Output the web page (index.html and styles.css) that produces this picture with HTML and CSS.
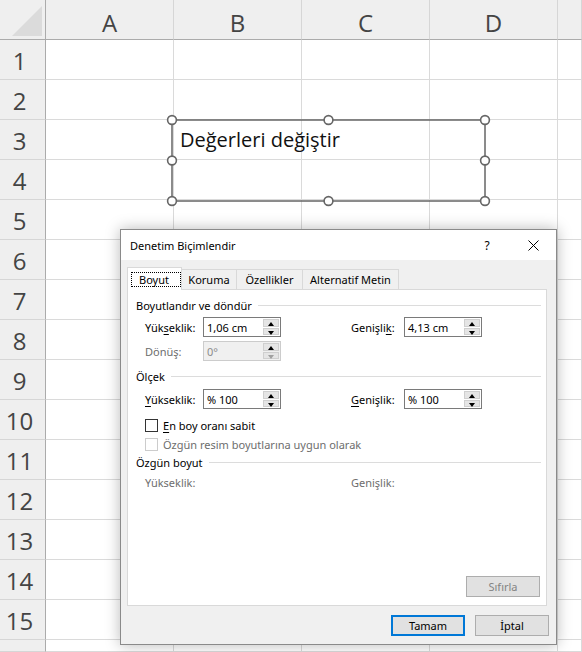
FILE: index.html
```html
<!DOCTYPE html>
<html lang="tr">
<head>
<meta charset="utf-8">
<title>Denetim Biçimlendir</title>
<link rel="stylesheet" href="styles.css">
</head>
<body>
<div class="sheet">
  <div class="corner"><svg width="45" height="39" viewBox="0 0 45 39"><polygon points="12,36 42,36 42,6" fill="#dbdbdb"/></svg></div>
  <div class="colh">A</div><div class="colh">B</div><div class="colh">C</div><div class="colh">D</div><div class="colh"></div>
  <div class="rowh">1</div><div class="cell"></div><div class="cell"></div><div class="cell"></div><div class="cell"></div><div class="cell"></div>
  <div class="rowh">2</div><div class="cell"></div><div class="cell"></div><div class="cell"></div><div class="cell"></div><div class="cell"></div>
  <div class="rowh">3</div><div class="cell"></div><div class="cell"></div><div class="cell"></div><div class="cell"></div><div class="cell"></div>
  <div class="rowh">4</div><div class="cell"></div><div class="cell"></div><div class="cell"></div><div class="cell"></div><div class="cell"></div>
  <div class="rowh">5</div><div class="cell"></div><div class="cell"></div><div class="cell"></div><div class="cell"></div><div class="cell"></div>
  <div class="rowh">6</div><div class="cell"></div><div class="cell"></div><div class="cell"></div><div class="cell"></div><div class="cell"></div>
  <div class="rowh">7</div><div class="cell"></div><div class="cell"></div><div class="cell"></div><div class="cell"></div><div class="cell"></div>
  <div class="rowh">8</div><div class="cell"></div><div class="cell"></div><div class="cell"></div><div class="cell"></div><div class="cell"></div>
  <div class="rowh">9</div><div class="cell"></div><div class="cell"></div><div class="cell"></div><div class="cell"></div><div class="cell"></div>
  <div class="rowh">10</div><div class="cell"></div><div class="cell"></div><div class="cell"></div><div class="cell"></div><div class="cell"></div>
  <div class="rowh">11</div><div class="cell"></div><div class="cell"></div><div class="cell"></div><div class="cell"></div><div class="cell"></div>
  <div class="rowh">12</div><div class="cell"></div><div class="cell"></div><div class="cell"></div><div class="cell"></div><div class="cell"></div>
  <div class="rowh">13</div><div class="cell"></div><div class="cell"></div><div class="cell"></div><div class="cell"></div><div class="cell"></div>
  <div class="rowh">14</div><div class="cell"></div><div class="cell"></div><div class="cell"></div><div class="cell"></div><div class="cell"></div>
  <div class="rowh">15</div><div class="cell"></div><div class="cell"></div><div class="cell"></div><div class="cell"></div><div class="cell"></div>
  <div class="rowh last"></div><div class="cell"></div><div class="cell"></div><div class="cell"></div><div class="cell"></div><div class="cell"></div>
</div>

<div class="shape">
  <svg class="shape-frame" width="325" height="93" viewBox="0 0 325 93">
    <rect x="6" y="6" width="313" height="81" fill="none" stroke="#666" stroke-width="1.5"/>
    <g fill="#fff" stroke="#666" stroke-width="1.6">
      <circle cx="6" cy="6" r="4.4"/><circle cx="162.5" cy="6" r="4.4"/><circle cx="319" cy="6" r="4.4"/>
      <circle cx="6" cy="46.5" r="4.4"/><circle cx="319" cy="46.5" r="4.4"/>
      <circle cx="6" cy="87" r="4.4"/><circle cx="162.5" cy="87" r="4.4"/><circle cx="319" cy="87" r="4.4"/>
    </g>
  </svg>
  <div class="shape-text">Değerleri değiştir</div>
</div>

<div class="dialog">
  <div class="titlebar">
    <span class="title">Denetim Biçimlendir</span>
    <span class="tbtn help">?</span>
    <span class="tbtn close"><svg width="11" height="11" viewBox="0 0 11 11"><path d="M0.5 0.5 L10.5 10.5 M10.5 0.5 L0.5 10.5" stroke="#000" stroke-width="1"/></svg></span>
  </div>
  <div class="dbody">
    <div class="tabs">
      <div class="tab sel"><span class="focus">Boyut</span></div>
      <div class="tab w55">Koruma</div>
      <div class="tab w66">Özellikler</div>
      <div class="tab w96">Alternatif Metin</div>
    </div>
    <div class="panel">
      <div class="group g1">Boyutlandır ve döndür</div>
      <div class="frow r1">
        <span class="lbl">Yük<u>s</u>eklik:</span>
        <span class="spin"><span class="val">1,06 cm</span><span class="arrows"><span class="up"></span><span class="down"></span></span></span>
        <span></span>
        <span class="lbl">Genişli<u>k</u>:</span>
        <span class="spin"><span class="val">4,13 cm</span><span class="arrows"><span class="up"></span><span class="down"></span></span></span>
      </div>
      <div class="frow r2">
        <span class="lbl dis">Dönüş:</span>
        <span class="spin disabled"><span class="val">0°</span><span class="arrows"><span class="up"></span><span class="down"></span></span></span>
      </div>
      <div class="group g2">Ölçek</div>
      <div class="frow r3">
        <span class="lbl"><u>Y</u>ükseklik:</span>
        <span class="spin"><span class="val">% 100</span><span class="arrows"><span class="up"></span><span class="down"></span></span></span>
        <span></span>
        <span class="lbl"><u>G</u>enişlik:</span>
        <span class="spin"><span class="val">% 100</span><span class="arrows"><span class="up"></span><span class="down"></span></span></span>
      </div>
      <div class="chk c1"><span class="box"></span><span><u>E</u>n boy oranı sabit</span></div>
      <div class="chk c2 dis"><span class="box"></span><span>Özgün resim boyutlarına uygun olarak</span></div>
      <div class="group g3">Özgün boyut</div>
      <div class="frow r4">
        <span class="lbl dis">Yükseklik:</span>
        <span></span>
        <span></span>
        <span class="lbl dis">Genişlik:</span>
      </div>
      <button class="btn reset" disabled>Sıfırla</button>
    </div>
    <div class="footer">
      <button class="btn ok">Tamam</button>
      <button class="btn">İptal</button>
    </div>
  </div>
</div>
</body>
</html>
```

FILE: styles.css
```css
html, body {
  margin: 0;
  padding: 0;
}
body {
  width: 582px;
  height: 652px;
  overflow: hidden;
  position: relative;
  background: #fff;
  font-family: "Open Sans", "Noto Sans", sans-serif;
}

/* ---------- spreadsheet ---------- */
.sheet {
  width: 582px;
  height: 652px;
  overflow: hidden;
  display: grid;
  grid-template-columns: 46px repeat(4, 128px) 1fr;
  grid-template-rows: repeat(16, 40px) 12px;
}
.sheet > div {
  box-sizing: border-box;
}
.corner {
  background: #efefef;
  border-right: 1px solid #ababab;
  border-bottom: 1px solid #ababab;
}
.corner svg { display: block; }
.colh {
  background: #efefef;
  border-right: 1px solid #d6d6d6;
  border-bottom: 1px solid #ababab;
  color: #444;
  font-size: 24px;
  display: flex;
  align-items: center;
  justify-content: center;
  padding-top: 6px;
  line-height: 1;
}
.rowh {
  background: #efefef;
  border-right: 1px solid #ababab;
  border-bottom: 1px solid #d6d6d6;
  color: #444;
  font-size: 24px;
  display: flex;
  align-items: center;
  justify-content: center;
  padding: 3px 6px 0 0;
  line-height: 1;
}
.cell {
  border-right: 1px solid #dadada;
  border-bottom: 1px solid #dadada;
}

/* ---------- shape ---------- */
.shape {
  position: absolute;
  left: 166px;
  top: 114px;
  width: 325px;
  height: 93px;
}
.shape-frame {
  position: absolute;
  left: 0;
  top: 0;
}
.shape-text {
  position: relative;
  padding: 12px 0 0 14px;
  font-family: "Open Sans", sans-serif;
  font-size: 20px;
  line-height: 27px;
  color: #111;
}

/* ---------- dialog ---------- */
.dialog {
  position: absolute;
  left: 120px;
  top: 229px;
  width: 437px;
  height: 416px;
  box-sizing: border-box;
  border: 1px solid #8a8a8a;
  background: #f0f0f0;
  box-shadow: 0 0 14px rgba(0, 0, 0, 0.28);
  display: flex;
  flex-direction: column;
  font-family: "Noto Sans", sans-serif;
  font-size: 11px;
  color: #000;
}
.titlebar {
  height: 30px;
  background: #fff;
  display: flex;
  align-items: center;
  padding-left: 9px;
}
.title {
  flex: 1;
  font-size: 11px;
}
.tbtn {
  width: 46px;
  height: 30px;
  display: flex;
  align-items: center;
  justify-content: center;
}
.help {
  font-size: 12px;
  padding-top: 1px;
  box-sizing: border-box;
}
.close svg { display: block; }

.dbody {
  flex: 1;
  display: flex;
  flex-direction: column;
  padding: 7px 9px 8px 6px;
}
.tabs {
  display: flex;
  align-items: flex-end;
  height: 22px;
  position: relative;
  z-index: 1;
}
.tab {
  box-sizing: border-box;
  height: 20px;
  border-top: 1px solid #d9d9d9;
  border-right: 1px solid #d9d9d9;
  display: flex;
  align-items: center;
  justify-content: center;
  padding-bottom: 1px;
}
.tab.sel {
  width: 55px;
  height: 23px;
  margin-bottom: -1px;
  background: #fff;
  border: 1px solid #d9d9d9;
  border-bottom: none;
  justify-content: flex-start;
  align-items: flex-start;
  padding: 4px 0 0 3px;
}
.focus {
  box-sizing: border-box;
  width: 50px;
  height: 15px;
  border: 1px dotted #000;
  display: flex;
  align-items: center;
  justify-content: center;
  padding-right: 4px;
}
.w55 { width: 55px; }
.w66 { width: 66px; }
.w96 { width: 96px; }

.panel {
  box-sizing: border-box;
  height: 317px;
  background: #fff;
  border: 1px solid #d9d9d9;
  display: flex;
  flex-direction: column;
}
.group {
  display: flex;
  align-items: center;
  margin: 0 5px 0 8px;
  height: 20px;
}
.group::after {
  content: "";
  flex: 1;
  height: 1px;
  background: #dcdcdc;
  margin-left: 6px;
}
.g1 { margin-top: 5px; }
.g2 { margin-top: 5px; }
.g3 { height: 18px; }

.frow {
  display: grid;
  grid-template-columns: 58px 78px 70px 53px 78px;
  align-items: center;
  padding-left: 17px;
  height: 20px;
}
.r1 { margin-top: 2px; }
.r2 { margin-top: 4px; }
.r3 { margin-top: 3px; }
.r4 { margin-top: 2px; height: 18px; }

.lbl { white-space: nowrap; }
.dis { color: #6d6d6d; }
u { text-underline-offset: 2px; }

.spin {
  position: relative;
  box-sizing: border-box;
  height: 20px;
  border: 1px solid #7a7a7a;
  background: #fff;
  display: flex;
  align-items: center;
  padding-left: 3px;
}
.spin.disabled {
  background: #f0f0f0;
  border-color: #cccccc;
  color: #8c8c8c;
}
.arrows {
  position: absolute;
  right: 1px;
  top: 1px;
  bottom: 1px;
  width: 16px;
  display: flex;
  flex-direction: column;
  gap: 1px;
}
.arrows span {
  flex: 1;
  box-sizing: border-box;
  background: #e5e5e5;
  border: 1px solid #cfcfcf;
  position: relative;
}
.arrows span::after {
  content: "";
  position: absolute;
  left: 4px;
  top: 2px;
  border-left: 3px solid transparent;
  border-right: 3px solid transparent;
}
.arrows .up::after { border-bottom: 4px solid #000; }
.arrows .down::after { border-top: 4px solid #000; top: 2px; }
.disabled .arrows .down::after { border-top-color: #a0a0a0; }

.chk {
  display: flex;
  align-items: center;
  padding-left: 17px;
  height: 19px;
  white-space: nowrap;
}
.c1 { margin-top: 7px; }
.c2 { height: 18px; }
.box {
  box-sizing: border-box;
  width: 13px;
  height: 13px;
  border: 1px solid #333;
  background: #fff;
  margin-right: 5px;
}
.chk.dis .box { border-color: #cccccc; }

.btn {
  box-sizing: border-box;
  width: 74px;
  height: 21px;
  background: #e1e1e1;
  border: 1px solid #adadad;
  font-family: "Noto Sans", sans-serif;
  font-size: 11px;
  color: #000;
  padding: 0;
  margin: 0;
}
.reset {
  margin-top: auto;
  align-self: flex-end;
  margin-right: 6px;
  margin-bottom: 8px;
  color: #838383;
}
.footer {
  display: flex;
  justify-content: flex-end;
  gap: 10px;
  margin-top: 9px;
  margin-right: -2px;
}
.btn.ok { border: 2px solid #0078d7; }
```
